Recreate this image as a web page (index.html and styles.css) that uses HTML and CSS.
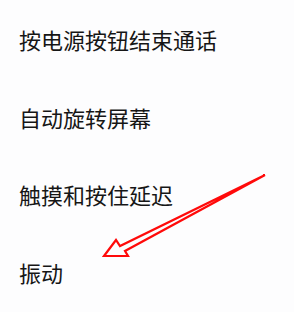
FILE: index.html
```html
<!DOCTYPE html>
<html lang="zh-CN">
<head>
  <meta charset="UTF-8" />
  <title>设置</title>
  <meta name="viewport" content="width=device-width, initial-scale=1.0"/>
  <link rel="stylesheet" href="styles.css">
</head>
<body>
  <ul class="settings">
    <li class="item">按电源按钮结束通话</li>
    <li class="item">自动旋转屏幕</li>
    <li class="item">触摸和按住延迟</li>
    <li class="item">振动</li>
  </ul>

  <!-- 标注箭头 -->
  <svg class="mark" width="294" height="312" viewBox="0 0 294 312">
    <polygon points="265,175 120,246 116,240 104,256 128,256 125,251"
             fill="none" stroke="#ff0a0a" stroke-width="2.2" stroke-linejoin="miter"/>
  </svg>
</body>
</html>
```

FILE: styles.css
```css
body {
  margin: 0;
  background: #fdfdfe;
  font-family: "Noto Sans CJK SC", "Noto Sans", sans-serif;
  color: #161616;
  overflow: hidden;
}

.settings {
  list-style: none;
  margin: 0;
  padding: 1px 0 0 19px;
}

.item {
  height: 77.5px;
  line-height: 77.5px;
  font-size: 22px;
}

.mark {
  position: absolute;
  left: 0;
  top: 0;
}
```
